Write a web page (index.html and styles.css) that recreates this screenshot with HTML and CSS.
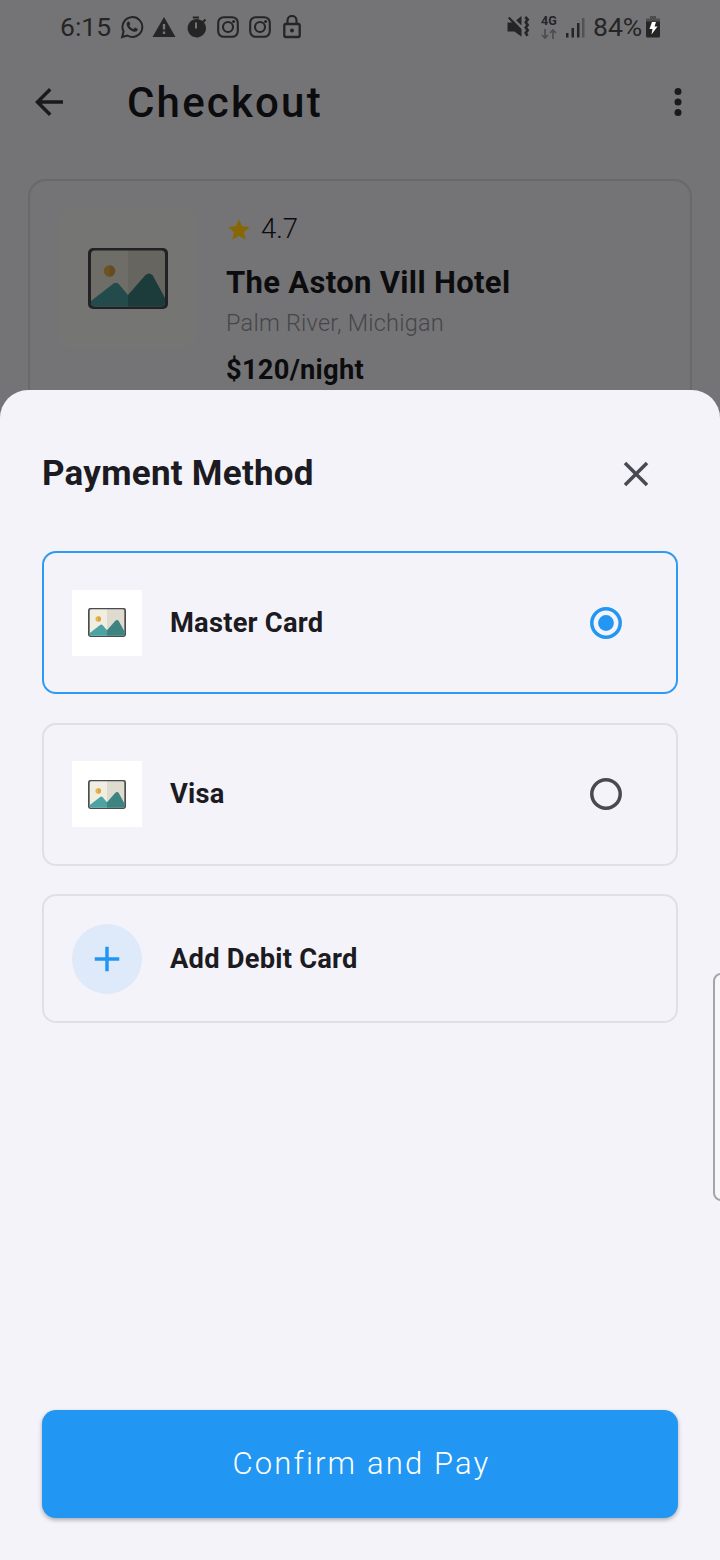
FILE: index.html
```html
<!DOCTYPE html>
<html lang="en">
<head>
<meta charset="utf-8">
<title>Checkout</title>
<link rel="stylesheet" href="styles.css">
</head>
<body>
<svg class="defs" aria-hidden="true">
  <symbol id="photo" viewBox="0 0 80 61" preserveAspectRatio="none">
    <clipPath id="pane"><rect x="3" y="2.5" width="74" height="56" rx="4"/></clipPath>
    <rect class="frame" width="80" height="61" rx="5"/>
    <g clip-path="url(#pane)">
      <rect class="sky-l" x="3" y="2" width="37" height="57"/>
      <rect class="sky-r" x="40" y="2" width="37" height="57"/>
      <circle class="sun-l" cx="21.5" cy="23" r="5.8"/>
      <path class="sun-r" d="M21.5 17.2a5.8 5.8 0 0 1 0 11.6z"/>
      <path class="hill-l" d="M3 53 25.500 35.500Q28 34 30.500 35.800L40 47V59H3z"/>
      <path class="hill-r" d="M40 47 57.500 27Q61 24 64.500 27L77 50V59H40z"/>
    </g>
  </symbol>
  <symbol id="insta" viewBox="0 0 24 24">
    <rect x="2.200" y="2.200" width="19.600" height="19.600" rx="5.500" fill="none" stroke="currentColor" stroke-width="2.100"/>
    <circle cx="12" cy="12" r="5" fill="none" stroke="currentColor" stroke-width="2.100"/>
    <circle cx="17.600" cy="6.400" r="1.500" fill="currentColor"/>
  </symbol>
</svg>
<div class="screen">
  <div class="status">
    <div class="status-left">
      <span class="clock">6:15</span>
      <svg class="ic" viewBox="0 0 24 24"><path d="M2.100 22 3.600 16.500A9.900 9.900 0 1 1 7.400 20.500z" fill="none" stroke="currentColor" stroke-width="2"/><path fill="currentColor" d="M8.200 6.600c.5-.4 1-.2 1.200.3l.8 1.900c.1.300 0 .6-.9 1.600.9 1.800 2.300 3 4.200 3.800l1.200-1.400c.2-.2.4-.3.700-.1l2 1c.4.200.4.400.3.900-.3 1.600-1.800 2.400-3.200 2.200-4-.6-7.300-4-7.900-7.300-.1-1.100.6-2.200 1.600-2.900z"/></svg>
      <svg class="ic" viewBox="0 0 24 24"><path fill="currentColor" fill-rule="evenodd" d="M12 2 23.500 22H.5zM10.800 9v5.500h2.400V9zm0 7.500v2.400h2.400v-2.400z"/></svg>
      <svg class="ic" viewBox="0 0 24 24"><path fill="currentColor" fill-rule="evenodd" d="M8.800 1.500h6.200v2H8.800zM18.500 6l2.300-2.200 1.400 1.400-2.200 2.300A9.200 9.200 0 1 1 18.500 6zM11 7.500v6h2v-6z"/></svg>
      <svg class="ic"><use href="#insta"/></svg>
      <svg class="ic"><use href="#insta"/></svg>
      <svg class="ic" viewBox="0 0 24 24"><rect x="4.300" y="9" width="15.400" height="13" rx="1.500" fill="none" stroke="currentColor" stroke-width="2.300"/><path d="M7.500 9V5.500a4.500 4.500 0 0 1 9 0V9" fill="none" stroke="currentColor" stroke-width="2.200"/><circle cx="12" cy="15.500" r="2" fill="currentColor"/></svg>
    </div>
    <div class="status-right">
      <svg class="mute" viewBox="0 0 24 24"><path fill="currentColor" d="M.5 7.500H5L1 3.200 2.500 1.700 14.500 14v7.800L7.500 16.500H.5zM9.200 5.200 14.500 1v9.500z"/><path d="M18.300 2l2.400 2.500-2 2.700 2 2.700-2 2.700 2 2.700-2 2.600 1.800 3" stroke="currentColor" stroke-width="2.600" fill="none"/></svg>
      <div class="net"><span>4G</span><svg viewBox="0 0 16 10"><path d="M4 0v9M1 6l3 3 3-3M12 10V1M9 4l3-3 3 3" fill="none" stroke="currentColor" stroke-width="1.700"/></svg></div>
      <svg class="signal" viewBox="0 0 20 21"><path fill="currentColor" d="M0 16h2.500v4.500H0zM5.500 11H8v9.500H5.500zM11 6h2.500v14.500H11z"/><path fill="#525254" d="M16 1h2.500v19.500H16z"/></svg>
      <span class="percent">84%</span>
      <svg class="battery" viewBox="0 0 14 22"><path fill="#4d4d4e" d="M4 0h6v2.500h4V7H0V2.500h4z"/><path fill="currentColor" d="M0 5.500h14V20q0 1.500-1.500 1.500h-11Q0 21.500 0 20z"/><path fill="#fff" d="M6 6h4L8.500 10.500H11.500L5.500 18.500 6.500 13H3.500z"/></svg>
    </div>
  </div>
  <div class="appbar">
    <svg class="back" viewBox="0 0 24 24"><path fill="currentColor" d="M20 11H7.830l5.590-5.590L12 4l-8 8 8 8 1.410-1.410L7.830 13H20z"/></svg>
    <h1>Checkout</h1>
    <svg class="more" viewBox="0 0 24 24"><g fill="currentColor"><circle cx="12" cy="6" r="2"/><circle cx="12" cy="12" r="2"/><circle cx="12" cy="18" r="2"/></g></svg>
  </div>
  <div class="hotel">
    <div class="thumb"><svg class="photo dim"><use href="#photo"/></svg></div>
    <div class="info">
      <div class="rating"><svg class="star" viewBox="0 0 24 24"><path fill="currentColor" d="M12 17.270 18.180 21l-1.640-7.030L22 9.240l-7.190-.61L12 2 9.190 8.630 2 9.240l5.460 4.730L5.820 21z"/></svg><span>4.7</span></div>
      <div class="name">The Aston Vill Hotel</div>
      <div class="place">Palm River, Michigan</div>
      <div class="price">$120/night</div>
    </div>
  </div>
  <div class="sheet">
    <div class="head">
      <h2>Payment Method</h2>
      <svg class="close" viewBox="0 0 24 24"><path fill="currentColor" d="M19 6.410 17.590 5 12 10.590 6.410 5 5 6.410 10.590 12 5 17.590 6.410 19 12 13.410 17.590 19 19 17.590 13.410 12z"/></svg>
    </div>
    <div class="option selected">
      <div class="logo"><svg class="photo"><use href="#photo"/></svg></div>
      <span class="label">Master Card</span>
      <svg class="radio" viewBox="0 0 32 32"><circle cx="16" cy="16" r="14.200" fill="none" stroke="currentColor" stroke-width="3.500"/><circle cx="16" cy="16" r="7.900" fill="currentColor"/></svg>
    </div>
    <div class="option visa">
      <div class="logo"><svg class="photo"><use href="#photo"/></svg></div>
      <span class="label">Visa</span>
      <svg class="radio" viewBox="0 0 32 32"><circle cx="16" cy="16" r="14.200" fill="none" stroke="currentColor" stroke-width="3.500"/></svg>
    </div>
    <div class="option add">
      <div class="plus"><svg viewBox="0 0 24 24"><path fill="currentColor" d="M19 13h-6v6h-2v-6H5v-2h6V5h2v6h6z"/></svg></div>
      <span class="label">Add Debit Card</span>
    </div>
    <button class="pay">Confirm and Pay</button>
  </div>
  <div class="edge-handle"></div>
</div>
</body>
</html>
```

FILE: styles.css
```css
* { box-sizing: border-box; }
body { margin: 0; font-family: Roboto, sans-serif; }
svg { display: block; flex: none; }
.defs { position: absolute; width: 0; height: 0; }
.screen { position: relative; width: 720px; height: 1560px; overflow: hidden; background: #747476; color: #0c0c0e; }

.status { display: flex; justify-content: space-between; height: 54px; padding: 0 60px; color: #252526; }
.status-left, .status-right { display: flex; align-items: center; }
.status span { white-space: nowrap; }
.clock { font-size: 26.500px; width: 60px; line-height: 54px; }
.ic { width: 24px; height: 24px; margin-right: 8px; }
.mute { width: 24px; height: 24px; margin-right: 10px; }
.net { width: 18px; margin-right: 7px; font-size: 12.500px; font-weight: 700; line-height: 12px; }
.net svg { width: 16px; height: 10px; margin-top: 2px; color: #4d4d4e; }
.signal { width: 20px; height: 21px; margin-right: 7px; }
.percent { font-size: 26.500px; width: 53px; line-height: 54px; }
.battery { width: 14px; height: 22px; }

.appbar { display: flex; align-items: center; height: 96px; padding: 0 21px 0 28px; color: #1a1a1b; }
.back { width: 42px; height: 42px; }
h1 { flex: 1; margin: 2px 0 0 57px; font-size: 42px; font-weight: 500; letter-spacing: 2.200px; line-height: 48px; color: #0c0c0e; }
.more { width: 42px; height: 42px; }

.hotel { display: flex; gap: 29px; height: 300px; margin: 29px 28px 0; padding: 27px 28px; border: 2px solid #69696a; border-radius: 18px; }
.thumb { display: flex; align-items: center; justify-content: center; width: 139px; height: 140px; border-radius: 14px; background: #757574; }
.thumb .photo { width: 80px; height: 61px; }
.rating { display: flex; align-items: center; gap: 9px; height: 40px; font-size: 27.500px; font-weight: 300; }
.star { width: 26px; height: 26px; color: #876700; position: relative; top: 2px; }
.name { margin-top: 17px; font-size: 31px; font-weight: 700; line-height: 36px; letter-spacing: .33px; }
.place { margin-top: 8px; font-size: 23.500px; font-weight: 300; line-height: 28px; letter-spacing: .22px; color: #464648; }
.price { margin-top: 16px; font-size: 27.300px; font-weight: 700; line-height: 34px; letter-spacing: .25px; }

.frame { fill: #4a4b50; }
.sky-l { fill: #f0eee1; }
.sky-r { fill: #dfdccf; }
.sun-l { fill: #ebb44f; }
.sun-r { fill: #dca445; }
.hill-l { fill: #4da3a4; }
.hill-r { fill: #3d8380; }
.dim { filter: brightness(.46); }

.sheet { position: absolute; left: 0; top: 390px; width: 720px; height: 1170px; padding: 0 42px 42px; display: flex; flex-direction: column; border-radius: 28px 28px 0 0; background: #f4f3fa; color: #1b1b21; }
.head { display: flex; align-items: center; justify-content: space-between; height: 161px; padding: 7px 21px 0 0; }
h2 { margin: 0; font-size: 35px; font-weight: 700; line-height: 42px; letter-spacing: .25px; }
.close { width: 42px; height: 42px; color: #494951; }
.option { display: flex; align-items: center; height: 143px; margin-bottom: 29px; padding: 0 54px 0 28px; border: 2px solid #e0e0e2; border-radius: 14px; color: #494951; }
.option.selected { border-color: #2e9bf3; color: #2196f3; }
.option.visa { padding-bottom: 1px; }
.logo { display: flex; align-items: center; justify-content: center; width: 70px; height: 66px; background: #fff; }
.logo .photo { width: 38px; height: 29px; }
.label { flex: 1; margin-left: 28px; font-size: 27.300px; font-weight: 700; line-height: 34px; letter-spacing: .22px; color: #1b1b21; }
.radio { width: 32px; height: 32px; }
.add { height: 129px; margin-bottom: 0; margin-top: -1px; }
.plus { display: flex; align-items: center; justify-content: center; width: 70px; height: 70px; border-radius: 50%; background: #dee9f9; color: #2196f3; }
.plus svg { width: 42px; height: 42px; }
.pay { height: 108px; margin-top: auto; padding: 0 0 0 3px; border: 0; border-radius: 14px; background: #2196f3; color: #fff; font: 300 31px/36px Roboto, sans-serif; letter-spacing: 2.150px; box-shadow: 0 2px 4px rgba(0, 0, 0, .3); }
.edge-handle { position: absolute; left: 713px; top: 973px; width: 16px; height: 228px; border: 2px solid #a5a5a8; border-radius: 8px; background: #f7f7fb; }
```
